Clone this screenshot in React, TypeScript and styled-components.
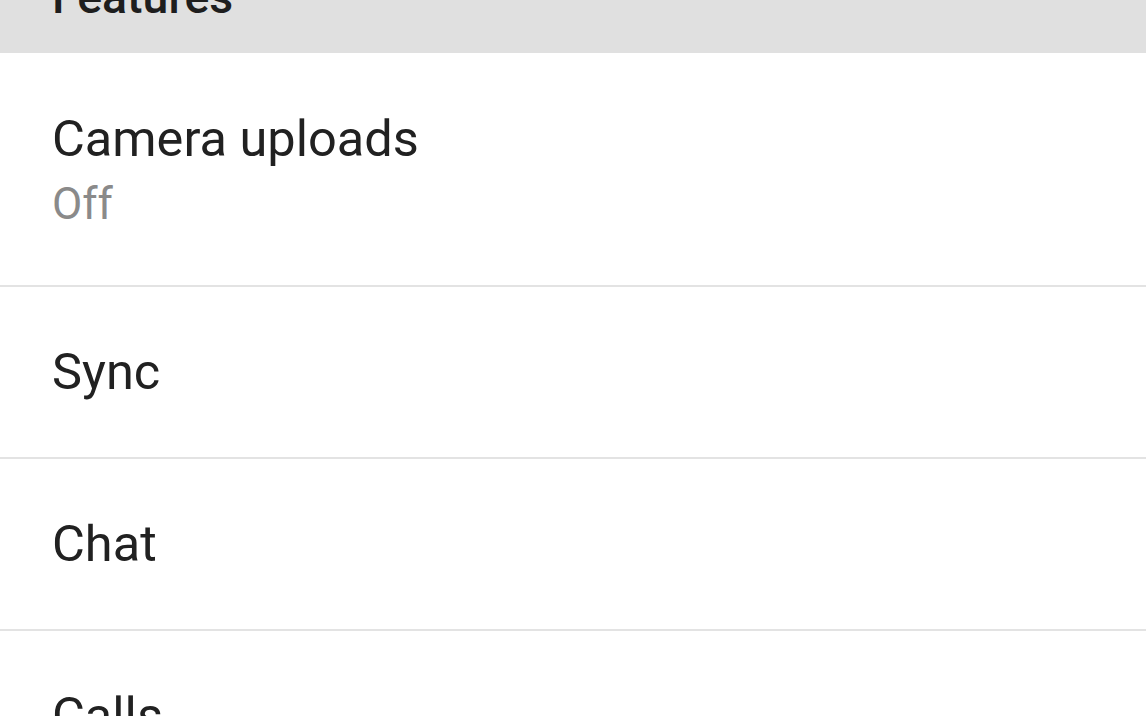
import React from "react";
import styled, { createGlobalStyle } from "styled-components";

const Global = createGlobalStyle`
  html, body { margin: 0; padding: 0; background: #ffffff; }
  body { font-family: Roboto, "Noto Sans", Arial, sans-serif; overflow: hidden; }
`;

const Screen = styled.div`
  width: 1146px;
  height: 716px;
  overflow: hidden;
  background: #ffffff;
  display: flex;
  flex-direction: column;
`;

const SectionHeader = styled.div`
  flex: 0 0 53px;
  height: 53px;
  background: #e0e0e0;
  display: flex;
  align-items: flex-end;
  padding: 0 52px 32px;
  box-sizing: border-box;
  overflow: hidden;
`;

const HeaderText = styled.span`
  font-size: 46.5px;
  line-height: 47px;
  font-weight: 500;
  color: #1e1e1e;
  white-space: nowrap;
`;

const Row = styled.div<{ $h: number }>`
  flex: 0 0 ${(p) => p.$h}px;
  height: ${(p) => p.$h}px;
  box-sizing: border-box;
  border-bottom: 2px solid #e3e3e3;
  display: flex;
  flex-direction: column;
  justify-content: center;
  padding: 0 52px;
`;

const Title = styled.div`
  font-size: 50.5px;
  line-height: 60px;
  color: #212121;
  white-space: nowrap;
`;

const Subtitle = styled.div`
  font-size: 44px;
  line-height: 52px;
  margin-top: 9px;
  color: #8a8a8a;
  white-space: nowrap;
`;

const items = [
  { title: "Camera uploads", sub: "Off", h: 234 },
  { title: "Sync", h: 172 },
  { title: "Chat", h: 172 },
  { title: "Calls", h: 172 },
];

export default function App() {
  return (
    <Screen>
      <Global />
      <SectionHeader>
        <HeaderText>Features</HeaderText>
      </SectionHeader>
      {items.map((it) => (
        <Row key={it.title} $h={it.h}>
          <Title>{it.title}</Title>
          {it.sub && <Subtitle>{it.sub}</Subtitle>}
        </Row>
      ))}
    </Screen>
  );
}
